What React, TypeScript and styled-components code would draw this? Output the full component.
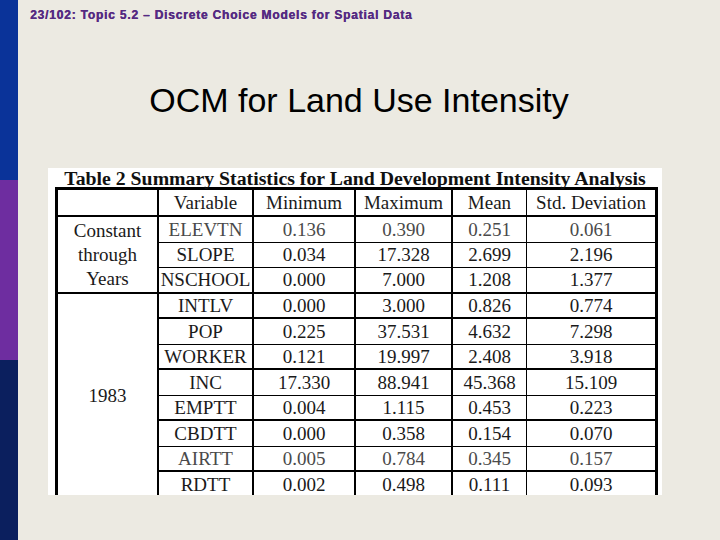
import React from "react";
import styled, {createGlobalStyle} from "styled-components";

const GlobalStyle = createGlobalStyle`
  html, body {
    margin: 0;
    padding: 0;
    background: #eceae2;
  }
`;

const Slide = styled.div`
  width: 720px;
  height: 540px;
  display: flex;
  overflow: hidden;
  background: #eceae2;
`;

const Strip = styled.div`
  width: 18px;
  display: flex;
  flex-direction: column;
`;

const Band = styled.div<{ $color: string }>`
  flex: 1 1 0;
  background: ${p => p.$color};
`;

const Main = styled.div`
  flex: 1 1 0;
  display: flex;
  flex-direction: column;
`;

const Topic = styled.div`
  padding: 8px 0 0 12px;
  font-family: "Liberation Sans", Arial, sans-serif;
  font-weight: bold;
  font-size: 12px;
  line-height: 14px;
  letter-spacing: 0.8px;
  color: #552a82;
  text-shadow: 0.4px 0 0 #552a82;
`;

const Title = styled.h1`
  margin: 58px 20px 0 0;
  font-family: "Liberation Sans", Arial, sans-serif;
  font-weight: normal;
  font-size: 34px;
  line-height: 40px;
  text-align: center;
  color: #000;
`;

const Figure = styled.div`
  margin: 48px 0 0 30px;
  width: 614px;
  height: 327px;
  background: #fff;
  overflow: hidden;
`;

const Caption = styled.div`
  margin-top: -1px;
  font-family: "Liberation Serif", "Times New Roman", serif;
  font-weight: bold;
  font-size: 19.8px;
  line-height: 22px;
  height: 20px;
  text-align: center;
  color: #111;
`;

const Table = styled.table`
  margin-left: 7px;
  width: 603px;
  table-layout: fixed;
  border-collapse: separate;
  border-spacing: 0;
  border: 3px solid #000;
  font-family: "Liberation Serif", "Times New Roman", serif;
  font-size: 19px;
  color: #1a1a1a;
`;

const Cell = styled.td<{ $w?: number; $h?: number; $b?: number; $r?: number; $faded?: boolean }>`
  box-sizing: border-box;
  padding: 0;
  text-align: center;
  vertical-align: middle;
  white-space: nowrap;
  line-height: 22px;
  font-weight: normal;
  ${p => (p.$w ? `width: ${p.$w}px;` : "")}
  ${p => (p.$h ? `height: ${p.$h}px;` : "")}
  border-bottom: ${p => p.$b ?? 1}px solid #000;
  border-right: ${p => p.$r ?? 0}px solid #000;
  color: ${p => (p.$faded ? "#4a4a4a" : "#1a1a1a")};
`;

const GroupCell = styled(Cell)`
  line-height: 24px;
`;

const columns = [
    {label: "", w: 101, r: 2},
    {label: "Variable", w: 95, r: 2},
    {label: "Minimum", w: 102, r: 2},
    {label: "Maximum", w: 97, r: 2},
    {label: "Mean", w: 74, r: 1},
    {label: "Std. Deviation", w: 128, r: 0},
];

const rows = [
    {v: ["ELEVTN", "0.136", "0.390", "0.251", "0.061"], h: 26, b: 1, faded: true},
    {v: ["SLOPE", "0.034", "17.328", "2.699", "2.196"], h: 25, b: 1},
    {v: ["NSCHOOL", "0.000", "7.000", "1.208", "1.377"], h: 26, b: 2},
    {v: ["INTLV", "0.000", "3.000", "0.826", "0.774"], h: 25, b: 2},
    {v: ["POP", "0.225", "37.531", "4.632", "7.298"], h: 26, b: 1},
    {v: ["WORKER", "0.121", "19.997", "2.408", "3.918"], h: 25, b: 2},
    {v: ["INC", "17.330", "88.941", "45.368", "15.109"], h: 26, b: 1},
    {v: ["EMPTT", "0.004", "1.115", "0.453", "0.223"], h: 25, b: 2},
    {v: ["CBDTT", "0.000", "0.358", "0.154", "0.070"], h: 26, b: 1},
    {v: ["AIRTT", "0.005", "0.784", "0.345", "0.157"], h: 25, b: 2, faded: true},
    {v: ["RDTT", "0.002", "0.498", "0.111", "0.093"], h: 28, b: 2},
];

const App: React.FC = () => {
    return (
        <>
            <GlobalStyle/>
            <Slide>
                <Strip>
                    <Band $color="#0a3399"/>
                    <Band $color="#6e2da0"/>
                    <Band $color="#0b1f5e"/>
                </Strip>
                <Main>
                    <Topic>23/102: Topic 5.2 – Discrete Choice Models for Spatial Data</Topic>
                    <Title>OCM for Land Use Intensity</Title>
                    <Figure>
                        <Caption>Table 2 Summary Statistics for Land Development Intensity Analysis</Caption>
                        <Table>
                            <thead>
                            <tr>
                                {columns.map((c, i) => (
                                    <Cell as="th" key={i} $w={c.w} $h={27} $b={2} $r={c.r}>
                                        {c.label}
                                    </Cell>
                                ))}
                            </tr>
                            </thead>
                            <tbody>
                            {rows.map((row, i) => (
                                <tr key={i}>
                                    {i === 0 && (
                                        <GroupCell rowSpan={3} $b={2} $r={2}>Constant<br/>through<br/>Years</GroupCell>
                                    )}
                                    {i === 3 && (
                                        <GroupCell rowSpan={8} $b={2} $r={2}>1983</GroupCell>
                                    )}
                                    {row.v.map((val, j) => (
                                        <Cell key={j} $h={row.h} $b={row.b} $r={columns[j + 1].r}
                                              $faded={row.faded}>
                                            {val}
                                        </Cell>
                                    ))}
                                </tr>
                            ))}
                            </tbody>
                        </Table>
                    </Figure>
                </Main>
            </Slide>
        </>
    );
};

export default App;
